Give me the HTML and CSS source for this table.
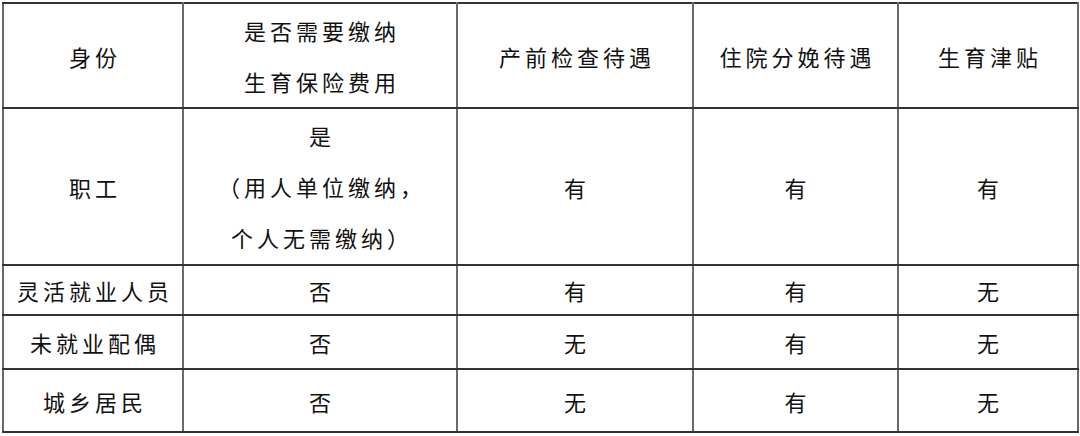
FILE: index.html
```html
<!DOCTYPE html>
<html lang="zh-CN">
<head>
<meta charset="utf-8">
<link rel="stylesheet" href="styles.css">
</head>
<body>
<table class="grid">
  <colgroup>
    <col class="c1"><col class="c2"><col class="c3"><col class="c4"><col class="c5">
  </colgroup>
  <tr class="r-head">
    <td>身份</td>
    <td class="multi">是否需要缴纳<br>生育保险费用</td>
    <td>产前检查待遇</td>
    <td>住院分娩待遇</td>
    <td>生育津贴</td>
  </tr>
  <tr class="r-staff">
    <td>职工</td>
    <td class="multi">是<br>（用人单位缴纳，<br>个人无需缴纳）</td>
    <td>有</td>
    <td>有</td>
    <td>有</td>
  </tr>
  <tr class="r-flex">
    <td>灵活就业人员</td>
    <td>否</td>
    <td>有</td>
    <td>有</td>
    <td>无</td>
  </tr>
  <tr class="r-spouse">
    <td>未就业配偶</td>
    <td>否</td>
    <td>无</td>
    <td>有</td>
    <td>无</td>
  </tr>
  <tr class="r-resident">
    <td>城乡居民</td>
    <td>否</td>
    <td>无</td>
    <td>有</td>
    <td>无</td>
  </tr>
</table>
</body>
</html>
```

FILE: styles.css
```css
html, body {
  background: #ffffff;
}
body {
  margin: 0;
  padding: 2px 0 0 2px;
  font-family: "Noto Sans CJK SC", "Noto Sans", sans-serif;
  color: #111111;
}
.grid {
  border-collapse: collapse;
  table-layout: fixed;
  width: 1075px;
}
.c1 { width: 180px; }
.c2 { width: 274px; }
.c3 { width: 236px; }
.c4 { width: 205px; }
.c5 { width: 180px; }
.grid td {
  border-top: 2px solid #333333;
  border-bottom: 2px solid #333333;
  border-left: 2px solid #6a6a6a;
  border-right: 2px solid #6a6a6a;
  text-align: center;
  vertical-align: middle;
  font-size: 22px;
  font-weight: 400;
  letter-spacing: 4px;
  padding: 0 0 0 4px;
  line-height: 30px;
}
.grid td.multi {
  line-height: 51px;
}
.r-head td { height: 103px; }
.r-staff td { height: 155px; }
.r-flex td { height: 48px; }
.r-spouse td { height: 52px; }
.r-resident td { height: 61px; }
```
